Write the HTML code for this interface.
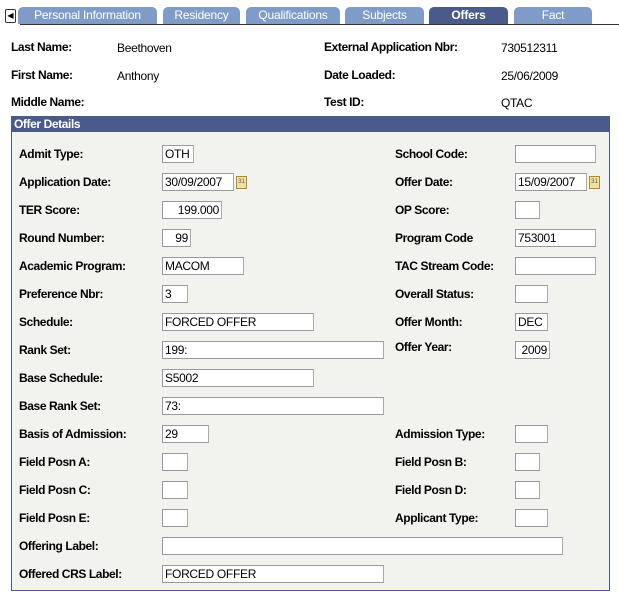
<!DOCTYPE html><html><head><style>
body{margin:0;width:619px;height:595px;background:#fff;font-family:"Liberation Sans",Arial,sans-serif;position:relative;overflow:hidden}
.a{position:absolute;white-space:nowrap}
.l{font-weight:bold;font-size:12px;color:#000;letter-spacing:-0.4px}
.v{font-size:12px;color:#000;letter-spacing:-0.3px}
.t{position:absolute;top:7px;height:17px;background:#7f9cc9;color:#fff;font-size:12px;text-align:center;line-height:17px;border-radius:5px 5px 0 0;letter-spacing:-0.2px}
.i{position:absolute;height:16px;background:#fff;border:1px solid #999;border-right-color:#aaa;font-size:12px;line-height:16px;padding:0 2px;box-sizing:content-box;letter-spacing:-0.3px}
.c{position:absolute;width:9px;height:11px;background:#f0e2a0;border:1px solid #b08a30;font-size:6px;line-height:11px;text-align:center;color:#555}
</style></head><body>
<div class="a" style="left:5px;top:9px;width:9px;height:12px;border:1px solid #333;border-radius:2px;font-size:8px;line-height:12px;text-align:center">◀</div>
<div class="t" style="left:18px;width:139px">Personal Information</div>
<div class="t" style="left:163px;width:77px">Residency</div>
<div class="t" style="left:246px;width:94px">Qualifications</div>
<div class="t" style="left:345px;width:79px">Subjects</div>
<div class="t" style="left:429px;width:79px;background:#4a5a8a;font-weight:bold">Offers</div>
<div class="t" style="left:514px;width:78px">Fact</div>
<div class="a" style="left:20px;top:24px;width:599px;height:1px;background:#333"></div>

<div class="a l" style="left:11px;top:40px">Last Name:</div><div class="a v" style="left:117px;top:41px">Beethoven</div>
<div class="a l" style="left:11px;top:68px">First Name:</div><div class="a v" style="left:117px;top:69px">Anthony</div>
<div class="a l" style="left:11px;top:95px">Middle Name:</div>
<div class="a l" style="left:324px;top:40px">External Application Nbr:</div><div class="a v" style="left:501px;top:41px">730512311</div>
<div class="a l" style="left:324px;top:68px">Date Loaded:</div><div class="a v" style="left:501px;top:69px">25/06/2009</div>
<div class="a l" style="left:324px;top:95px">Test ID:</div><div class="a v" style="left:501px;top:96px">QTAC</div>

<div class="a" style="left:11px;top:116px;width:597px;height:473px;border:1px solid #4a5a8a;background:#f2f3ef"></div>
<div class="a" style="left:11px;top:116px;width:599px;height:16px;background:#4a5a8a;color:#fff;font-weight:bold;font-size:12px;line-height:16px;letter-spacing:-0.4px"><span style="padding-left:3px">Offer Details</span></div>

<div class="a l" style="left:19px;top:147px">Admit Type:</div><div class="i" style="left:162px;top:145px;width:26px">OTH</div>
<div class="a l" style="left:19px;top:175px">Application Date:</div><div class="i" style="left:162px;top:173px;width:66px">30/09/2007</div><div class="c" style="left:236px;top:176px">31</div>
<div class="a l" style="left:19px;top:203px">TER Score:</div><div class="i" style="left:162px;top:201px;width:54px;text-align:right">199.000</div>
<div class="a l" style="left:19px;top:231px">Round Number:</div><div class="i" style="left:162px;top:229px;width:23px;text-align:right">99</div>
<div class="a l" style="left:19px;top:259px">Academic Program:</div><div class="i" style="left:162px;top:257px;width:76px">MACOM</div>
<div class="a l" style="left:19px;top:287px">Preference Nbr:</div><div class="i" style="left:162px;top:285px;width:20px">3</div>
<div class="a l" style="left:19px;top:315px">Schedule:</div><div class="i" style="left:162px;top:313px;width:146px">FORCED OFFER</div>
<div class="a l" style="left:19px;top:343px">Rank Set:</div><div class="i" style="left:162px;top:341px;width:216px">199:</div>
<div class="a l" style="left:19px;top:371px">Base Schedule:</div><div class="i" style="left:162px;top:369px;width:146px">S5002</div>
<div class="a l" style="left:19px;top:399px">Base Rank Set:</div><div class="i" style="left:162px;top:397px;width:216px">73:</div>
<div class="a l" style="left:19px;top:427px">Basis of Admission:</div><div class="i" style="left:162px;top:425px;width:41px">29</div>
<div class="a l" style="left:19px;top:455px">Field Posn A:</div><div class="i" style="left:162px;top:453px;width:20px"></div>
<div class="a l" style="left:19px;top:483px">Field Posn C:</div><div class="i" style="left:162px;top:481px;width:20px"></div>
<div class="a l" style="left:19px;top:511px">Field Posn E:</div><div class="i" style="left:162px;top:509px;width:20px"></div>
<div class="a l" style="left:19px;top:539px">Offering Label:</div><div class="i" style="left:162px;top:537px;width:395px"></div>
<div class="a l" style="left:19px;top:567px">Offered CRS Label:</div><div class="i" style="left:162px;top:565px;width:216px">FORCED OFFER</div>

<div class="a l" style="left:395px;top:147px">School Code:</div><div class="i" style="left:515px;top:145px;width:75px"></div>
<div class="a l" style="left:395px;top:175px">Offer Date:</div><div class="i" style="left:515px;top:173px;width:66px">15/09/2007</div><div class="c" style="left:589px;top:176px">31</div>
<div class="a l" style="left:395px;top:203px">OP Score:</div><div class="i" style="left:515px;top:201px;width:19px"></div>
<div class="a l" style="left:395px;top:231px">Program Code</div><div class="i" style="left:515px;top:229px;width:75px">753001</div>
<div class="a l" style="left:395px;top:259px">TAC Stream Code:</div><div class="i" style="left:515px;top:257px;width:75px"></div>
<div class="a l" style="left:395px;top:287px">Overall Status:</div><div class="i" style="left:515px;top:285px;width:27px"></div>
<div class="a l" style="left:395px;top:315px">Offer Month:</div><div class="i" style="left:515px;top:313px;width:27px">DEC</div>
<div class="a l" style="left:395px;top:340px">Offer Year:</div><div class="i" style="left:515px;top:341px;width:29px;text-align:right">2009</div>
<div class="a l" style="left:395px;top:427px">Admission Type:</div><div class="i" style="left:515px;top:425px;width:27px"></div>
<div class="a l" style="left:395px;top:455px">Field Posn B:</div><div class="i" style="left:515px;top:453px;width:19px"></div>
<div class="a l" style="left:395px;top:483px">Field Posn D:</div><div class="i" style="left:515px;top:481px;width:19px"></div>
<div class="a l" style="left:395px;top:511px">Applicant Type:</div><div class="i" style="left:515px;top:509px;width:27px"></div>
</body></html>
